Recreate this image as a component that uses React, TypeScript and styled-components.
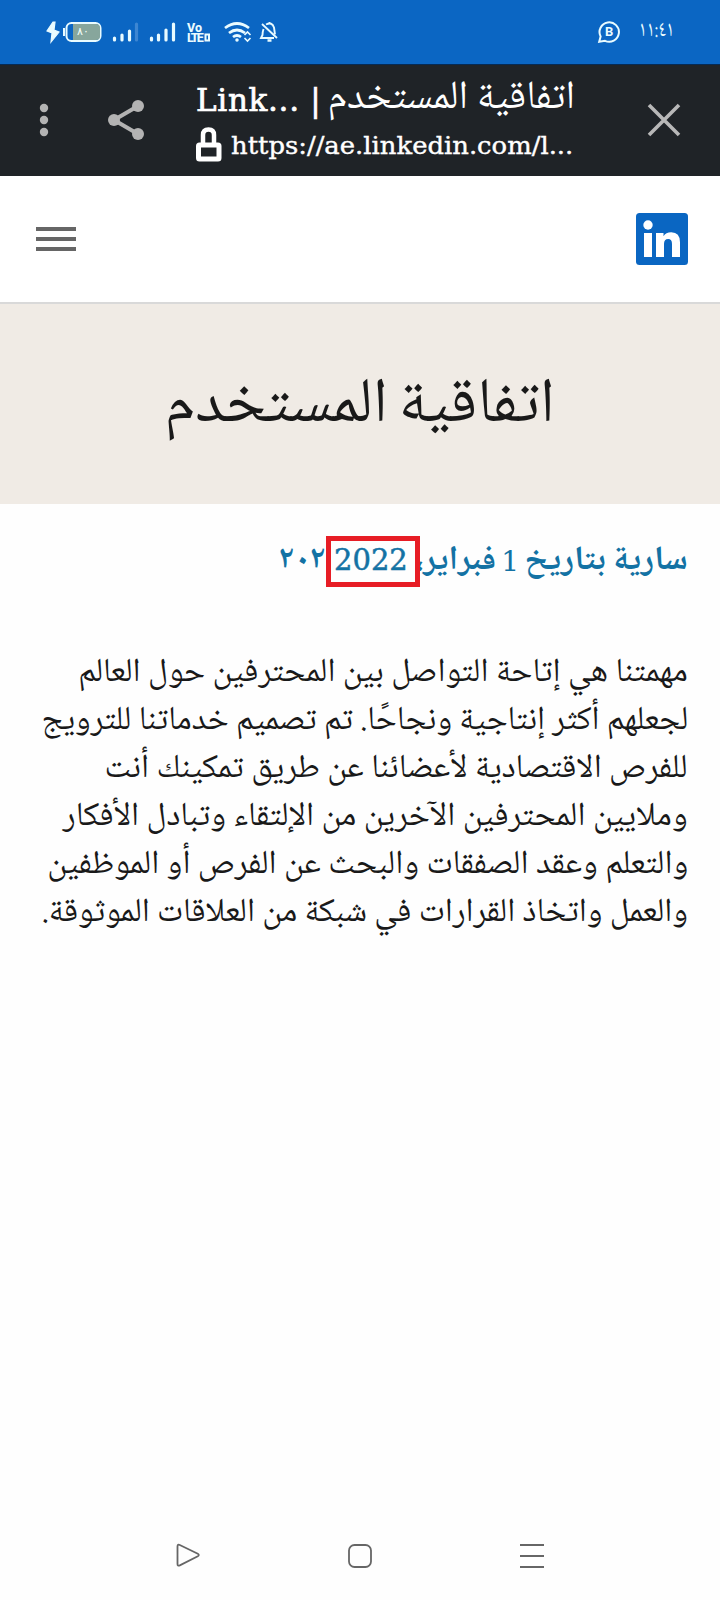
import React from 'react';
import styled, { createGlobalStyle } from 'styled-components';

const GlobalStyle = createGlobalStyle`
  * { box-sizing: border-box; }
  body { margin: 0; background: #fff; }
`;

const arabic = `"Noto Naskh Arabic", "Noto Sans Arabic", "DejaVu Sans", sans-serif`;
const slab = `"DejaVu Serif", serif`;

const Screen = styled.div`
  width: 720px;
  height: 1600px;
  display: flex;
  flex-direction: column;
  background: #fefefe;
  overflow: hidden;
`;

const StatusBar = styled.header`
  height: 64px;
  flex: none;
  display: flex;
  align-items: center;
  justify-content: space-between;
  padding: 0 46px 0 44px;
  background: #0b66c3;
  color: #e9fbff;
`;

const StatusClock = styled.div`
  display: flex;
  align-items: center;
  gap: 19px;
`;

const Time = styled.span`
  width: 34px;
  direction: rtl;
  font: 22px/24px ${arabic};
  margin-top: -2px;
`;

const Toolbar = styled.nav`
  height: 112px;
  flex: none;
  display: flex;
  align-items: center;
  background: #1f2327;
  border-top: 1px solid #052a54;
  padding: 0 39px 2px 36px;
`;

const TitleBlock = styled.div`
  width: 380px;
  margin-left: 50px;
  margin-right: auto;
  display: flex;
  flex-direction: column;
  color: #fff;
`;

const TitleRow = styled.div`
  height: 52px;
  display: flex;
  align-items: flex-start;
  white-space: nowrap;
`;

const SiteName = styled.span`
  width: 136px;
  padding-top: 2px;
  font: 31px/52px ${slab};
  letter-spacing: 0.7px;
  -webkit-text-stroke: 0.7px #fff;
`;

const Fitted = styled.span<{ $scale: number }>`
  display: inline-block;
  white-space: nowrap;
  transform: scaleX(${(p) => p.$scale});
  transform-origin: ${(p) => (p.dir === 'ltr' ? 'left' : 'right')} center;
`;

const PageName = styled.div`
  width: 243px;
  direction: rtl;
  padding-top: 4px;
  font: 40px/46px ${arabic};
`;

const UrlRow = styled.div`
  height: 44px;
  display: flex;
  align-items: center;
  gap: 9px;
  font: 25px/44px ${slab};
  -webkit-text-stroke: 0.4px #fff;
`;

const SiteHeader = styled.div`
  height: 128px;
  flex: none;
  display: flex;
  align-items: center;
  justify-content: space-between;
  padding: 0 32px 0 36px;
  border-bottom: 2px solid #d9d9d9;
  background: #fff;
`;

const MenuButton = styled.div`
  display: flex;
  flex-direction: column;
  gap: 6px;
`;

const MenuBar = styled.span`
  width: 40px;
  height: 4px;
  background: #666;
`;

const Hero = styled.section`
  height: 200px;
  flex: none;
  display: flex;
  justify-content: flex-end;
  padding: 0 165px;
  background: #f0ebe5;
`;

const HeroTitle = styled.h1`
  margin: 0;
  padding-top: 54px;
  direction: rtl;
  width: 388px;
  font: 400 63px/100px ${arabic};
  word-spacing: -3px;
  color: #191919;
`;

const Article = styled.main`
  flex: 1;
  direction: rtl;
  padding: 32px 32px 0;
`;

const EffectiveDate = styled.h2`
  margin: 0;
  height: 51px;
  display: flex;
  align-items: center;
  font: 700 34px/51px ${arabic};
  color: #1372a4;
`;

const DateText = styled.div<{ $width: number }>`
  width: ${(p) => p.$width}px;
  flex: none;
  padding-top: 1px;
`;

const DayNumber = styled.span`
  width: 23px;
  flex: none;
  font: 400 28px/49px ${slab};
`;

const YearBox = styled.div`
  width: 94px;
  height: 51px;
  flex: none;
  position: relative;
  z-index: 1;
  border: 5px solid #e71d25;
  background: #fefefe;
  font: 400 29px/39px ${slab};
  direction: ltr;
  padding-left: 3px;
  -webkit-text-stroke: 0.5px #1372a4;
`;

const OldYear = styled.div`
  width: 47px;
  direction: ltr;
  white-space: nowrap;
  font-size: 32px;
`;

const Mission = styled.p`
  margin: 63px 0 0;
  font: 33.5px/48px ${arabic};
  color: #191919;
`;

const MissionLine = styled.span`
  display: block;
  height: 48px;
`;

const SystemNav = styled.footer`
  height: 88px;
  flex: none;
  display: flex;
  align-items: center;
  justify-content: space-between;
  padding: 0 176px;
`;

const lines: [string, number][] = [
  ['مهمتنا هي إتاحة التواصل بين المحترفين حول العالم', 1.003],
  ['لجعلهم أكثر إنتاجية ونجاحًا. تم تصميم خدماتنا للترويج', 0.993],
  ['للفرص الاقتصادية لأعضائنا عن طريق تمكينك أنت', 1.001],
  ['وملايين المحترفين الآخرين من الإلتقاء وتبادل الأفكار', 1.002],
  ['والتعلم وعقد الصفقات والبحث عن الفرص أو الموظفين', 1.006],
  ['والعمل واتخاذ القرارات في شبكة من العلاقات الموثوقة.', 1],
];

const StatusIcons = () => (
  <svg width="236" height="28" viewBox="44 18 236 28" fill="none" stroke="#e9fbff">
    <path d="M53 22l-6 9 5 2-1 9 8-10-5-2 1-8z" fill="#e9fbff" strokeWidth="1.200" />
    <path d="M64 28v8" strokeWidth="2" />
    <rect x="66.500" y="23" width="34" height="18" rx="5" strokeWidth="2" />
    <path d="M73 24h23q4 0 4 4v8q0 4-4 4H73z" fill="#87a69c" stroke="none" />
    <text x="77" y="34.500" fontSize="11" fill="#f4fff9" stroke="none" fontFamily="DejaVu Sans, sans-serif">٨٠</text>
    <g strokeWidth="3.200" strokeLinecap="round">
      <path d="M114.500 38v2M122 35v5M129.500 31v9M151.500 38v2M158.500 35v5M166 30v10M173.500 24v16" />
      <path d="M136.500 24v16" stroke="#3d86d2" />
    </g>
    <text fill="#e9fbff" stroke="none" fontFamily="Roboto, sans-serif" fontWeight="800" fontSize="12.500">
      <tspan x="187" y="31.500">Vo</tspan>
      <tspan x="187" y="42" letterSpacing="-1.700">LTE</tspan>
    </text>
    <path d="M205.500 34.500h3.500v6h-3.500z" strokeWidth="2" />
    <g strokeWidth="2.800">
      <path d="M225 28q12-9 24 0M229 33q8-6 16 0M233 37q4-3 8 0" />
      <circle cx="237" cy="40" r="1" fill="#e9fbff" strokeWidth="1.500" />
      <path d="M244.500 35l3-3 3 3M244.500 38l3 3 3-3" strokeWidth="1.600" />
    </g>
    <path d="M263.500 29q-1 3-1 6l-1.500 3h13M266 24.500q6-3 8 3l1 7M262 24l15 14M269.500 23v-1" strokeWidth="1.900" />
    <path d="M267.500 40.500h4" strokeWidth="2.500" />
  </svg>
);

const BusinessChatIcon = () => (
  <svg width="24" height="24" viewBox="0 0 24 24" fill="none" stroke="#e9fbff" strokeWidth="2">
    <path d="M3.600 16.500A9.700 9.700 0 1 1 8 20.800L2.200 21.800z" />
    <text x="8" y="16" fontSize="13" fontWeight="700" fill="#e9fbff" stroke="none" fontFamily="Roboto, sans-serif">B</text>
  </svg>
);

const MoreAndShare = () => (
  <svg width="110" height="42" viewBox="36 99 110 42" fill="#b3b3b3">
    <circle cx="44" cy="108" r="4.200" />
    <circle cx="44" cy="120" r="4.200" />
    <circle cx="44" cy="132" r="4.200" />
    <path d="M138 106L114 120l24 14" fill="none" stroke="#b3b3b3" strokeWidth="4" />
    <circle cx="138" cy="106" r="6" />
    <circle cx="114" cy="120" r="6" />
    <circle cx="138" cy="134" r="6" />
  </svg>
);

const LockIcon = () => (
  <svg width="26" height="38" viewBox="0 2 26 38" fill="none" stroke="#fff">
    <rect x="2.500" y="20" width="20.500" height="14" rx="1" strokeWidth="5" />
    <path d="M7 18V10q0-5.500 5.500-5.500T18 10v8" strokeWidth="4.500" />
  </svg>
);

const CloseIcon = () => (
  <svg width="34" height="34" viewBox="0 0 34 34" stroke="#b8b8b8" strokeWidth="3.600">
    <path d="M2 2l30 30M32 2L2 32" />
  </svg>
);

const LinkedInLogo = () => (
  <svg width="52" height="52" viewBox="0 0 52 52">
    <rect width="52" height="52" rx="3.500" fill="#0a66c2" />
    <g fill="#fff">
      <circle cx="12" cy="12" r="4.700" />
      <path d="M8 20h8v24H8zM20 20h7.500v3.300q2.200-4 7.800-4 8.700 0 8.700 10V44h-8V31q0-5-3.800-5-4.200 0-4.200 5v13h-8z" />
    </g>
  </svg>
);

export default function App() {
  return (
    <Screen>
      <GlobalStyle />
      <StatusBar>
        <StatusIcons />
        <StatusClock>
          <BusinessChatIcon />
          <Time>
            <Fitted $scale={0.8}>١١:٤١</Fitted>
          </Time>
        </StatusClock>
      </StatusBar>
      <Toolbar>
        <MoreAndShare />
        <TitleBlock>
          <TitleRow>
            <SiteName>Link... |</SiteName>
            <PageName>
              <Fitted $scale={1}>اتفاقية المستخدم</Fitted>
            </PageName>
          </TitleRow>
          <UrlRow>
            <LockIcon />
            <Fitted dir="ltr" $scale={1.034}>https://ae.linkedin.com/l...</Fitted>
          </UrlRow>
        </TitleBlock>
        <CloseIcon />
      </Toolbar>
      <SiteHeader>
        <MenuButton>
          <MenuBar />
          <MenuBar />
          <MenuBar />
        </MenuButton>
        <LinkedInLogo />
      </SiteHeader>
      <Hero>
        <HeroTitle>
          <Fitted $scale={1.01}>اتفاقية المستخدم</Fitted>
        </HeroTitle>
      </Hero>
      <Article>
        <EffectiveDate>
          <DateText $width={169}>
            <Fitted $scale={1.01}>سارية بتاريخ</Fitted>
          </DateText>
          <DayNumber>1</DayNumber>
          <DateText $width={76}>
            <Fitted $scale={1}>فبراير،</Fitted>
          </DateText>
          <YearBox>2022</YearBox>
          <OldYear>٢٠٢٠</OldYear>
        </EffectiveDate>
        <Mission>
          {lines.map(([text, scale]) => (
            <MissionLine key={text}>
              <Fitted $scale={scale}>{text}</Fitted>
            </MissionLine>
          ))}
        </Mission>
      </Article>
      <SystemNav>
        <svg width="24" height="26" viewBox="1 0 24 26" fill="none" stroke="#666" strokeWidth="1.800">
          <path d="M2.500 3.500q0-2.500 2.300-1.500l18 8.800q2 1.200 0 2.400l-18 9.200q-2.300 1-2.300-1.500z" />
        </svg>
        <svg width="24" height="24" viewBox="0 0 24 24" fill="none" stroke="#666" strokeWidth="1.800">
          <rect x="1" y="1" width="22" height="22" rx="5.500" />
        </svg>
        <svg width="24" height="26" viewBox="0 0 24 26" stroke="#666" strokeWidth="2">
          <path d="M0 2h24M0 13h24M0 24h24" />
        </svg>
      </SystemNav>
    </Screen>
  );
}
